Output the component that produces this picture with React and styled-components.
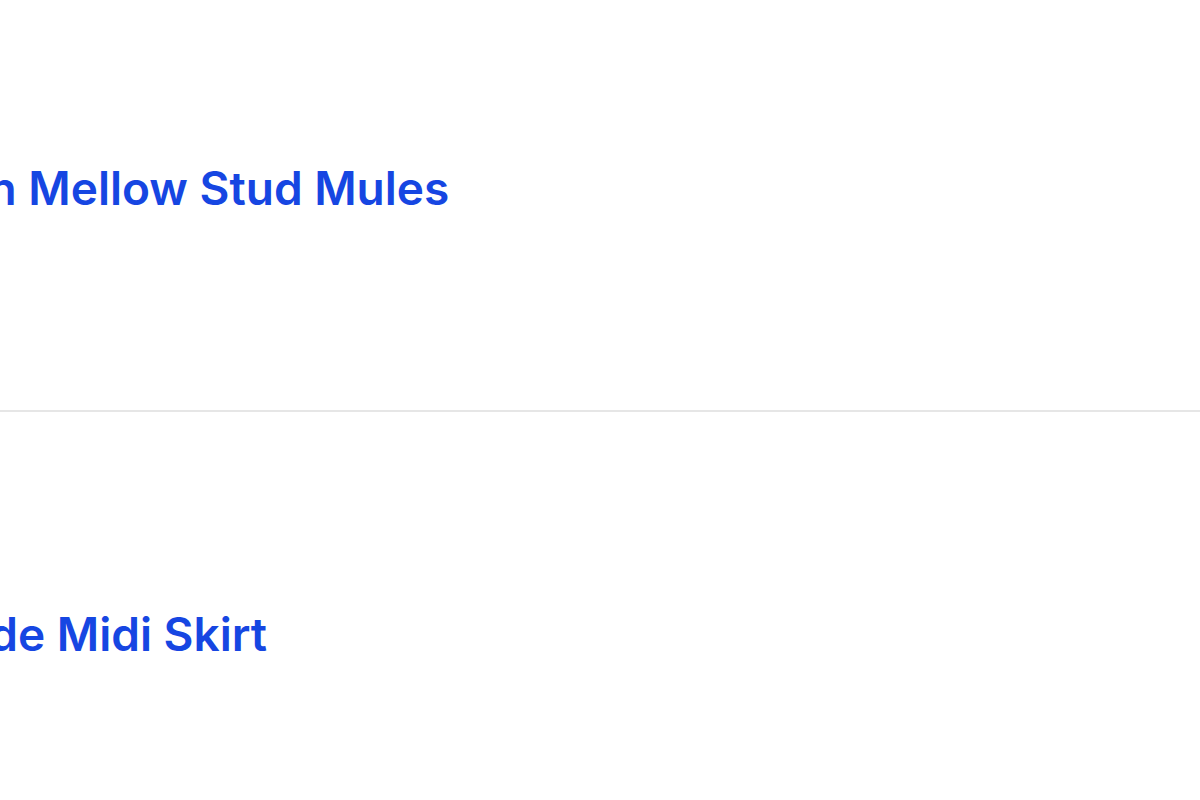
import styled, { createGlobalStyle } from "styled-components";
import React from "react";

const Global = createGlobalStyle`
  html, body {
    margin: 0;
    padding: 0;
    background: #ffffff;
    overflow: hidden;
  }
`;

const Page = styled.div`
  width: 1200px;
  height: 800px;
  overflow: hidden;
  background: #ffffff;
  font-family: Inter, "Liberation Sans", sans-serif;
`;

// list is scrolled a little up and to the left, so the names are cut at the edge
const List = styled.div`
  display: flex;
  flex-direction: column;
  margin-top: -34px;
  margin-left: -96px;
  width: 1300px;
`;

const Row = styled.div`
  display: flex;
  align-items: center;
  height: 444px;
  border-bottom: ${(p) => (p.last ? "none" : "2px solid #e6e6e6")};
`;

const Name = styled.a`
  font-size: 46px;
  font-weight: 600;
  color: #1646e2;
  text-decoration: none;
  white-space: nowrap;
`;

const items = [
  { id: 1, name: "Satin Mellow Stud Mules" },
  { id: 2, name: "Suede Midi Skirt" },
];

export default function App() {
  return (
    <Page>
      <Global />
      <List>
        {items.map((it, i) => (
          <Row key={it.id} last={i === items.length - 1}>
            <Name href="#">{it.name}</Name>
          </Row>
        ))}
      </List>
    </Page>
  );
}
